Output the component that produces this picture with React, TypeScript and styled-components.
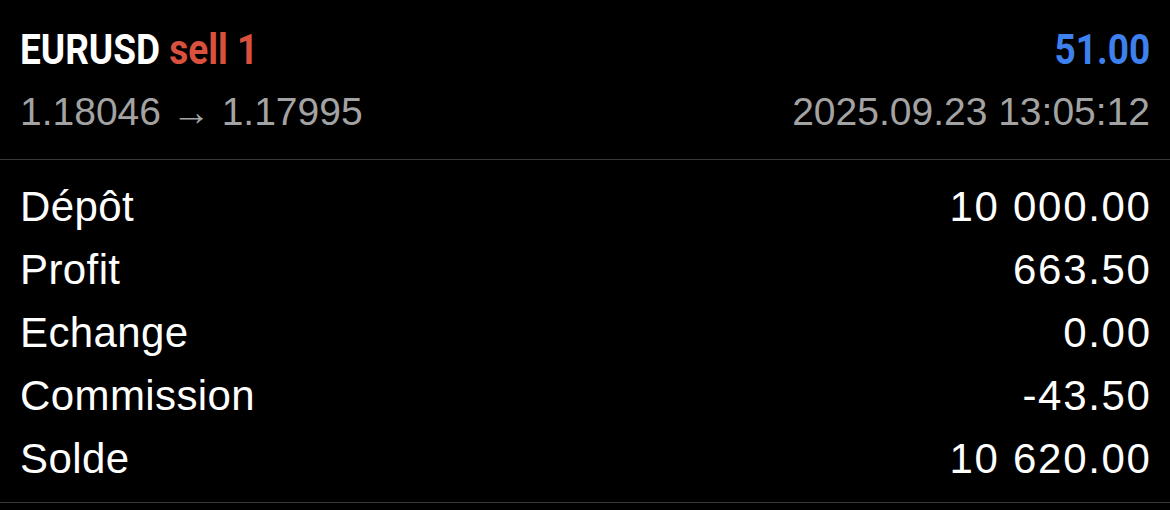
import { FC } from "react";
import styled, { createGlobalStyle } from "styled-components";

const GlobalStyle = createGlobalStyle`
  html, body {
    margin: 0;
    padding: 0;
    background: #000;
  }
  body {
    font-family: "Liberation Sans", Arial, sans-serif;
    -webkit-font-smoothing: antialiased;
  }
`;

const Page = styled.div`
  width: 1170px;
  height: 510px;
  background: #000;
  color: #fff;
  overflow: hidden;
`;

const Header = styled.div`
  display: flex;
  flex-direction: column;
  gap: 16px;
  padding: 25px 20px 0 20px;
  height: 160px;
  box-sizing: border-box;
  border-bottom: 1px solid #3a3a3c;
`;

const Line = styled.div`
  display: flex;
  justify-content: space-between;
  align-items: center;
`;

const Title = styled.div<{ $align?: "left" | "right" }>`
  display: inline-block;
  font-family: Roboto, "Liberation Sans", sans-serif;
  font-weight: 700;
  font-size: 43px;
  line-height: 48px;
  white-space: nowrap;
  transform: scaleX(0.86);
  transform-origin: ${(p) => (p.$align === "right" ? "right" : "left")} center;
`;

const Side = styled.span<{ $tone: "sell" | "buy" }>`
  color: ${(p) => (p.$tone === "sell" ? "#d9503f" : "#3d80ee")};
`;

const Volume = styled(Title)`
  color: #3d80ee;
`;

const Sub = styled.div`
  font-size: 39px;
  line-height: 46px;
  color: #a3a3a3;
  white-space: nowrap;
`;

const Rows = styled.div`
  display: flex;
  flex-direction: column;
  padding: 15px 20px 12px 20px;
  border-bottom: 1px solid #3a3a3c;
`;

const Row = styled.div`
  display: flex;
  justify-content: space-between;
  align-items: center;
  height: 63px;
  font-size: 42px;
`;

const Label = styled.span`
  color: #fff;
  letter-spacing: 0.4px;
`;

const Value = styled.span`
  color: #fff;
  letter-spacing: 1.7px;
  margin-right: -1.7px;
`;

type Item = { label: string; value: string };

const items: Item[] = [
  { label: "Dépôt", value: "10 000.00" },
  { label: "Profit", value: "663.50" },
  { label: "Echange", value: "0.00" },
  { label: "Commission", value: "-43.50" },
  { label: "Solde", value: "10 620.00" },
];

const App: FC = () => {
  return (
    <Page>
      <GlobalStyle />
      <Header>
        <Line>
          <Title>
            EURUSD <Side $tone="sell">sell 1</Side>
          </Title>
          <Volume $align="right">51.00</Volume>
        </Line>
        <Line>
          <Sub>1.18046 → 1.17995</Sub>
          <Sub>2025.09.23 13:05:12</Sub>
        </Line>
      </Header>
      <Rows>
        {items.map((it) => (
          <Row key={it.label}>
            <Label>{it.label}</Label>
            <Value>{it.value}</Value>
          </Row>
        ))}
      </Rows>
    </Page>
  );
};

export default App;
